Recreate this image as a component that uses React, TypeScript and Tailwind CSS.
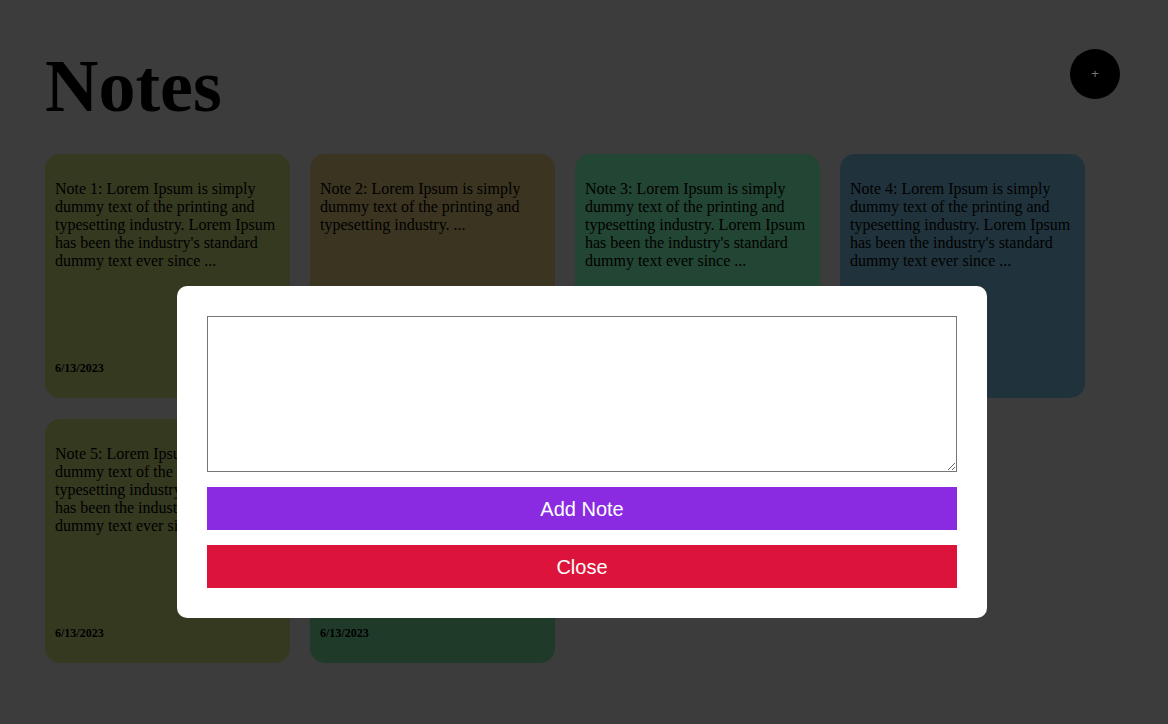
import { useState } from 'react';

const notes = [
  { id: 1, color: 'bg-[#353920]', text: "Note 1: Lorem Ipsum is simply dummy text of the printing and typesetting industry. Lorem Ipsum has been the industry's standard dummy text ever since ..." },
  { id: 2, color: 'bg-[#3b3420]', text: 'Note 2: Lorem Ipsum is simply dummy text of the printing and typesetting industry. ...' },
  { id: 3, color: 'bg-[#234533]', text: "Note 3: Lorem Ipsum is simply dummy text of the printing and typesetting industry. Lorem Ipsum has been the industry's standard dummy text ever since ..." },
  { id: 4, color: 'bg-[#20333c]', text: "Note 4: Lorem Ipsum is simply dummy text of the printing and typesetting industry. Lorem Ipsum has been the industry's standard dummy text ever since ..." },
  { id: 5, color: 'bg-[#353920]', text: "Note 5: Lorem Ipsum is simply dummy text of the printing and typesetting industry. Lorem Ipsum has been the industry's standard dummy text ever since ..." },
  { id: 6, color: 'bg-[#1f3a29]', text: 'Note 6: Lorem Ipsum is simply dummy text of the printing and typesetting industry. ...' },
];

const NoteCard = ({ text, color }: { text: string; color: string }) => (
  <div className={`flex h-[244px] w-[245px] flex-col justify-between rounded-[15px] p-[10px] ${color}`}>
    <p className="my-4 text-[16px] leading-[normal] text-black">{text}</p>
    <p className="my-3 text-[12px] font-bold leading-[normal] text-black">6/13/2023</p>
  </div>
);

export default function App() {
  const [open, setOpen] = useState(true);
  const [draft, setDraft] = useState('');

  return (
    <div className="relative min-h-[724px] bg-[#3c3c3c] pl-[45px] pr-[48px] pt-[42px] font-['Liberation_Serif',serif]">
      <div className="flex items-start justify-between">
        <h1 className="text-[74px] font-bold leading-[88px] text-black">Notes</h1>
        <button
          onClick={() => setOpen(true)}
          className="mt-[7px] flex h-[50px] w-[50px] items-center justify-center rounded-full bg-black font-['Liberation_Sans',sans-serif] text-[13px] text-[#777]"
        >
          +
        </button>
      </div>

      <div className="mt-[24px] grid grid-cols-[repeat(4,245px)] gap-x-[20px] gap-y-[21px]">
        {notes.map((n) => (
          <NoteCard key={n.id} text={n.text} color={n.color} />
        ))}
      </div>

      {open && (
        <div className="absolute left-[177px] top-[286px] w-[810px] rounded-[10px] bg-white p-[30px]">
          <textarea
            value={draft}
            onChange={(e) => setDraft(e.target.value)}
            className="block h-[156px] w-full resize border border-[#767676] bg-white"
          />
          <button className="mt-[15px] block h-[43px] w-full bg-[#8a2be2] font-['Liberation_Sans',sans-serif] text-[20px] text-white">
            Add Note
          </button>
          <button
            onClick={() => setOpen(false)}
            className="mt-[15px] block h-[43px] w-full bg-[#dc143c] font-['Liberation_Sans',sans-serif] text-[20px] text-white"
          >
            Close
          </button>
        </div>
      )}
    </div>
  );
}
